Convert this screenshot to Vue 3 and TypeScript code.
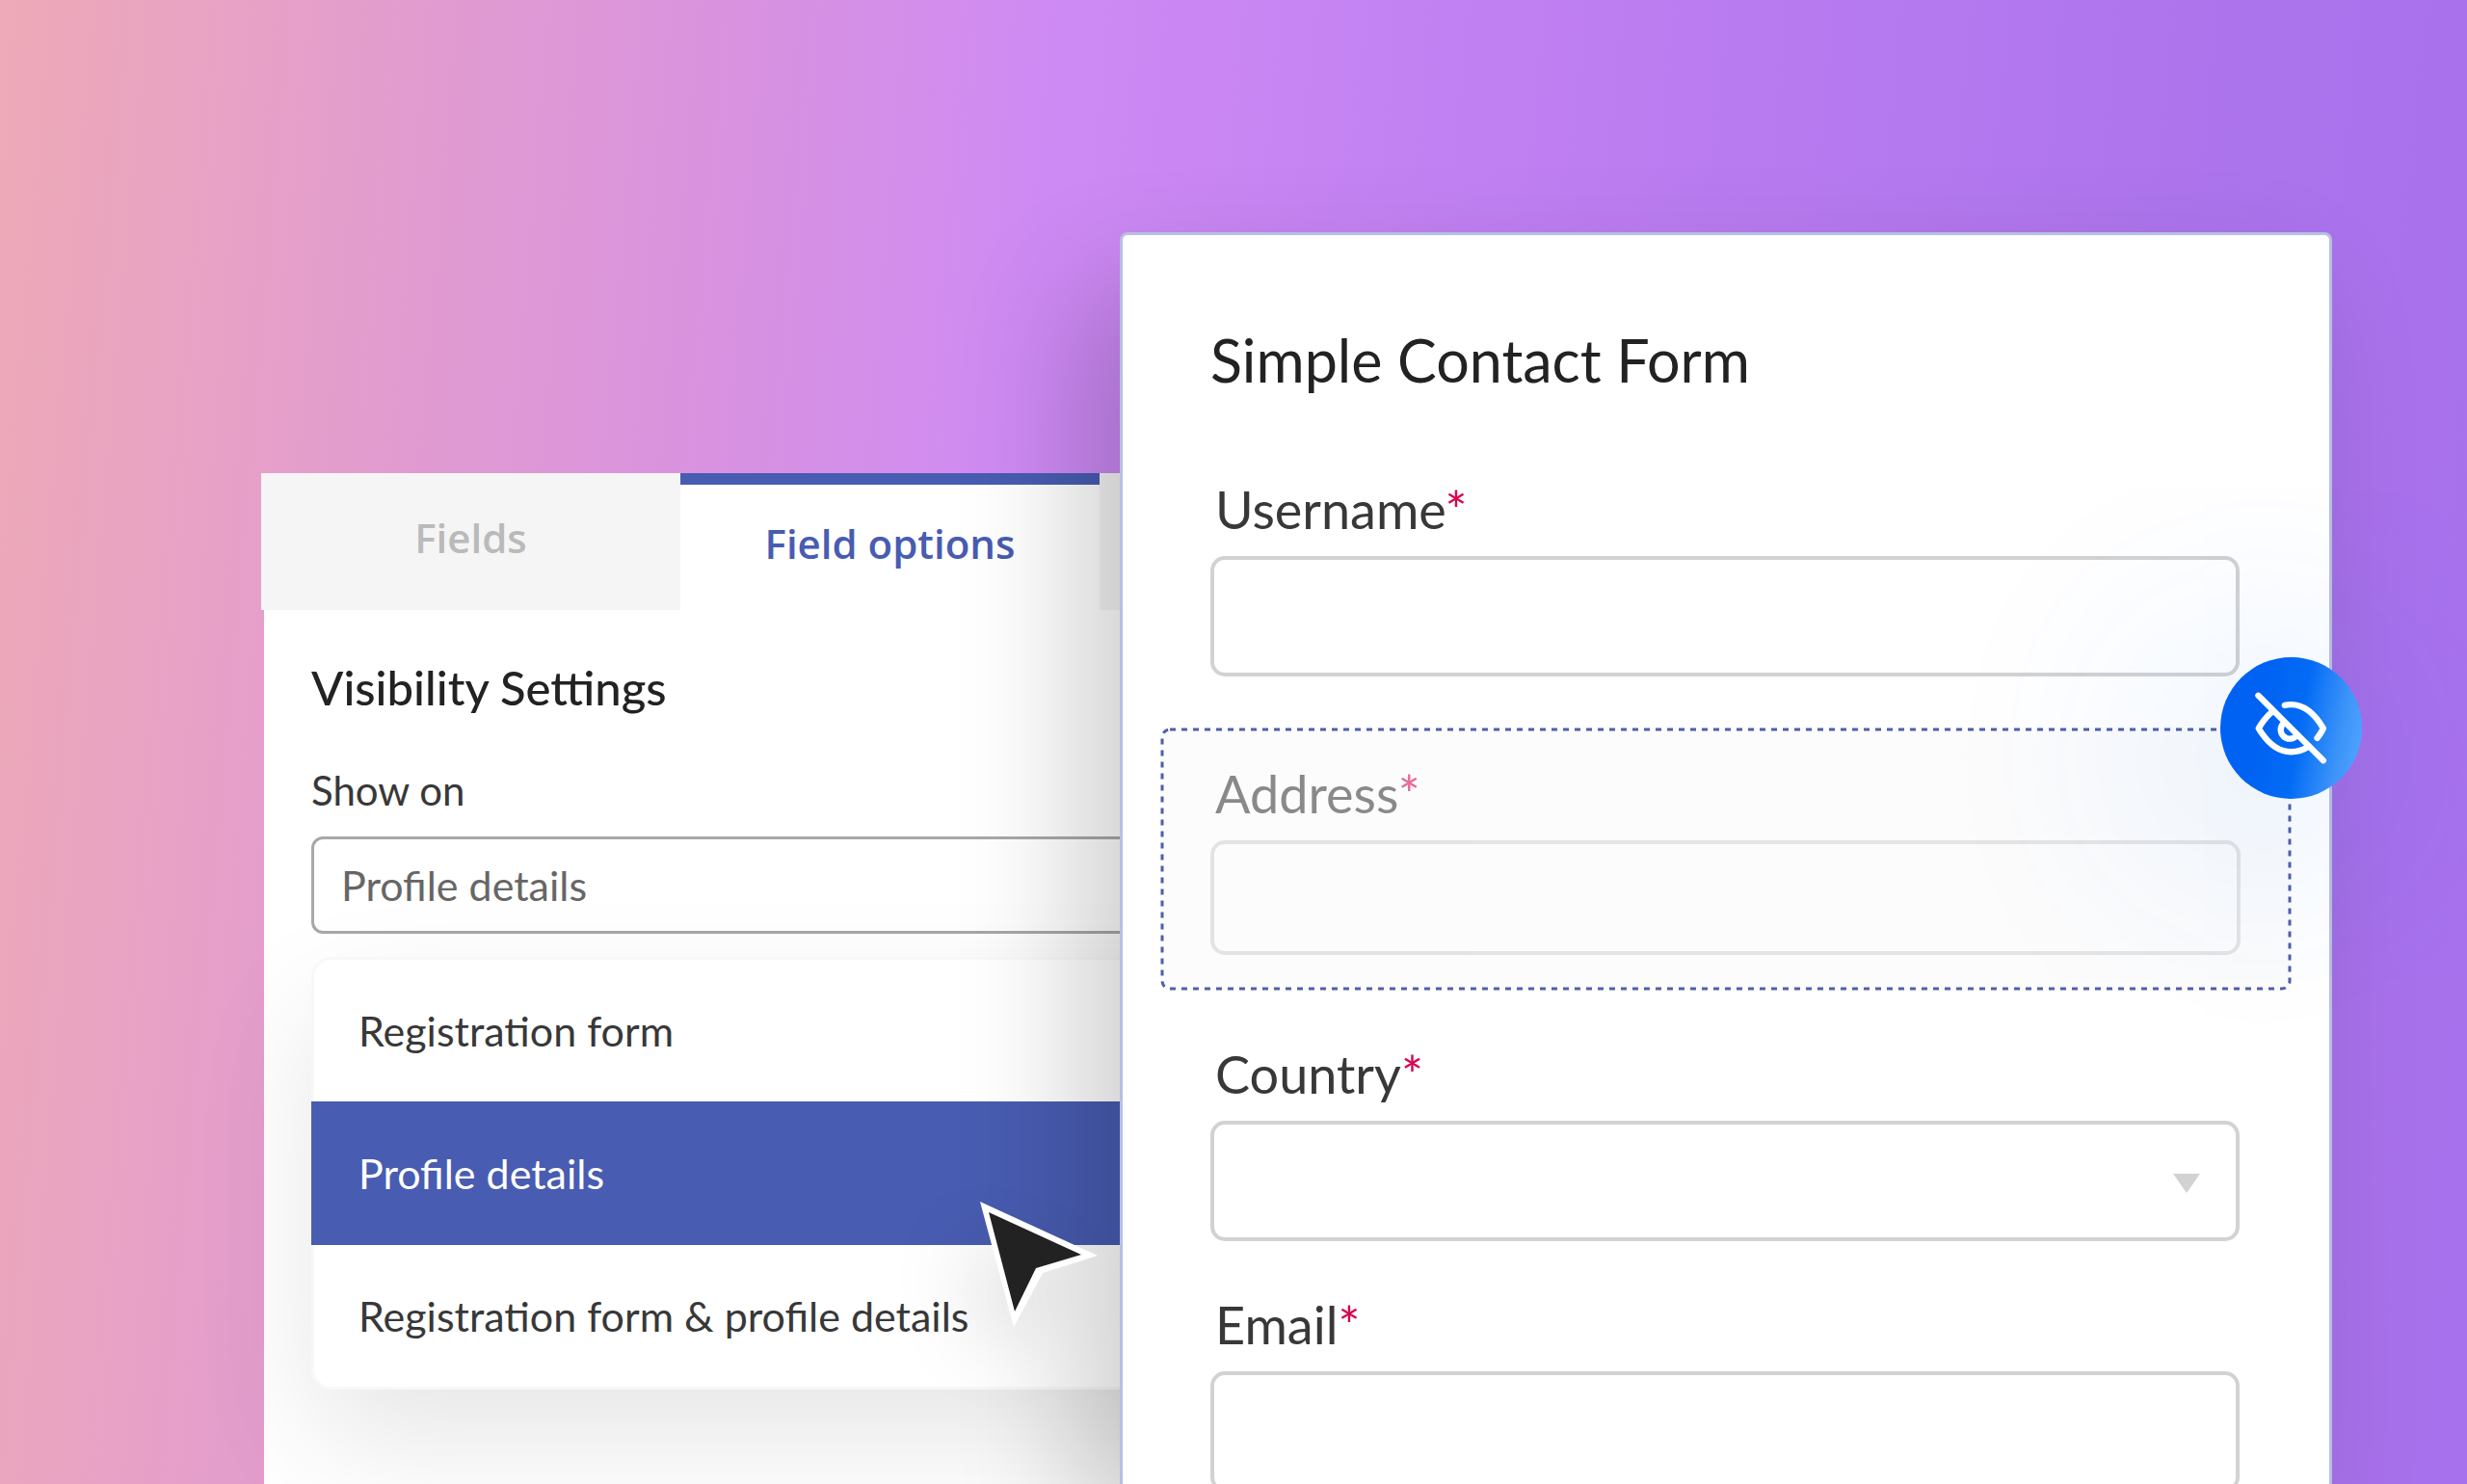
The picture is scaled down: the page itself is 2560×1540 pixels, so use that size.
<script setup lang="ts">
import { ref } from 'vue'

const options: string[] = ['Registration form', 'Profile details', 'Registration form & profile details']
const selected = ref<string>('Profile details')
</script>

<template>
  <main class="scene">
    <section class="panel">
      <div class="tabs" role="tablist">
        <button class="tab" role="tab" type="button" aria-selected="false">Fields</button>
        <button class="tab active" role="tab" type="button" aria-selected="true">Field options</button>
        <span class="tab"></span>
      </div>
      <div class="settings">
        <h2 class="settings-title">Visibility Settings</h2>
        <label class="settings-label" for="show-on">Show on</label>
        <select id="show-on" v-model="selected" class="show-on">
          <option v-for="option in options" :key="option" :value="option">{{ option }}</option>
        </select>
        <div class="menu" role="listbox">
          <button
            v-for="option in options"
            :key="option"
            class="menu-item"
            :class="{ chosen: option === selected }"
            role="option"
            type="button"
            :aria-selected="option === selected"
            @click="selected = option"
          >{{ option }}</button>
        </div>
      </div>
    </section>

    <form class="card" @submit.prevent>
      <h1 class="card-title">Simple Contact Form</h1>
      <div class="field">
        <label for="username">Username<span class="star">*</span></label>
        <input id="username" class="box" type="text" />
      </div>
      <div class="hidden-field">
        <svg class="outline"><rect x="2" y="2" rx="8" /></svg>
        <div class="field faded">
          <label for="address">Address<span class="star">*</span></label>
          <input id="address" class="box" type="text" />
        </div>
        <button class="badge" type="button">
          <svg viewBox="492 127 440 440" fill="none" stroke="#fff" stroke-width="19" stroke-linecap="round" stroke-linejoin="round">
            <path d="M610 246L812 448" />
            <path d="M652 297Q628 318 611 348Q655 421 711 421Q742 421 764 406" />
            <path d="M692 276Q762 262 812 348Q804 365 793 378" />
            <path d="M691 330A28 28 0 1 0 731 368" />
          </svg>
        </button>
      </div>
      <div class="field">
        <label for="country">Country<span class="star">*</span></label>
        <div class="select-wrap">
          <select id="country" class="box"></select>
          <svg class="arrow" viewBox="0 0 28 20"><path d="M0 0H28L14 20Z" fill="#d2d2d2" /></svg>
        </div>
      </div>
      <div class="field">
        <label for="email">Email<span class="star">*</span></label>
        <input id="email" class="box" type="email" />
      </div>
    </form>

    <svg class="cursor" viewBox="0 0 124 132">
      <path d="M1 1L123 57L66 75L36 131Z" fill="#fff" />
      <path d="M10 12L106 56L59 70L37 115Z" fill="#222" />
    </svg>
  </main>
</template>

<style>
body {
  margin: 0;
}
</style>

<style scoped>
.scene {
  position: relative;
  box-sizing: border-box;
  height: 100vh;
  overflow: hidden;
  display: grid;
  grid-template-columns: minmax(0, 271fr) minmax(0, 891fr) minmax(0, 414fr) minmax(0, 844fr) minmax(0, 140fr);
  grid-template-rows: 100%;
  background: linear-gradient(95deg, #eeaab7 0%, #e6a0c8 11%, #d892e0 29%, #ce8af4 41%, #bc7df1 63%, #ab73ec 88%, #a770ec 100%);
  font-family: Lato, sans-serif;
  color: #383838;
}

h1,
h2 {
  margin: 0;
  color: #222;
}

button,
input,
select {
  appearance: none;
  box-sizing: border-box;
  margin: 0;
  border: 0;
  font-family: inherit;
  color: inherit;
}

.panel {
  grid-column: 2 / 4;
  grid-row: 1;
  display: flex;
  flex-direction: column;
  margin-top: 491px;
}

.tabs {
  display: flex;
  height: 142px;
}

.tab {
  flex: 1;
  padding: 0 0 8px;
  background: #f5f5f5;
  color: #bababa;
  font: 600 42px/56px "Open Sans", sans-serif;
}

.tab.active {
  border-top: 12px solid #485cb1;
  background: #fff;
  color: #485cb1;
}

.settings {
  flex: 1;
  display: flex;
  flex-direction: column;
  margin-left: 3px;
  padding: 50px 0 0 49px;
  background: #fff;
}

.settings-title {
  font-size: 49px;
  line-height: 60px;
  font-weight: 500;
}

.settings-label {
  margin-top: 51px;
  font-size: 42px;
  line-height: 52px;
}

.show-on {
  height: 101px;
  margin-top: 22px;
  padding: 0 28px;
  border: 3px solid #a8a8a8;
  border-radius: 12px;
  background: #fff;
  color: #666;
  font-size: 43px;
}

.menu {
  display: flex;
  flex-direction: column;
  margin-top: 27px;
  border-radius: 18px;
  background: #fff;
  box-shadow: 0 0 0 3px #f8f8f8, 0 54px 130px rgba(0, 0, 0, 0.1);
  margin-left: 3px;
}

.menu-item {
  height: 149px;
  padding: 0 46px;
  background: none;
  font-size: 43px;
  text-align: left;
}

.menu-item:first-child,
.menu-item:last-child {
  height: 147px;
}

.menu-item.chosen {
  margin-left: -3px;
  padding-left: 49px;
  background: #485cb1;
  color: #fff;
}

.card {
  grid-column: 3 / 5;
  grid-row: 1;
  display: flex;
  flex-direction: column;
  gap: 53px;
  margin-top: 241px;
  padding: 94px 93px 0 91px;
  border: 3px solid #b8bfe3;
  border-bottom: 0;
  border-radius: 8px 8px 0 0;
  background: #fff;
  box-shadow: -40px 60px 130px rgba(0, 0, 0, 0.2);
}

.card-title {
  margin-bottom: 32px;
  font-size: 61px;
  line-height: 72px;
  font-weight: 400;
}

.field {
  display: flex;
  flex-direction: column;
  gap: 14px;
}

.field label {
  padding-left: 5px;
  font-size: 54px;
  line-height: 68px;
}

.star {
  color: #d9004f;
}

.box {
  width: 100%;
  height: 125px;
  flex-shrink: 0;
  border: 4px solid #d2d2d2;
  border-radius: 15px;
  background: none;
}

.hidden-field {
  position: relative;
  margin: 0 -54px 0 -52px;
  padding: 35px 53px 37px 52px;
  border-radius: 8px;
  background: #fcfcfc;
}

.outline {
  position: absolute;
  top: 0;
  left: 0;
  width: 100%;
  height: 100%;
}

.outline rect {
  width: calc(100% - 4px);
  height: calc(100% - 4px);
  fill: none;
  stroke: #4f5fa8;
  stroke-width: 3px;
  stroke-dasharray: 6 6;
}

.faded {
  opacity: 0.58;
}

.faded .box {
  height: 119px;
}

.badge {
  position: absolute;
  top: -73px;
  right: -73px;
  width: 147px;
  height: 147px;
  padding: 0;
  border-radius: 50%;
  background: linear-gradient(100deg, #0062f3 30%, #026bf5 55%, #3b93f9 80%, #55a9ff 100%);
  box-shadow: -30px 30px 220px 90px rgba(0, 120, 255, 0.07);
}

.badge svg {
  display: block;
  width: 100%;
}

.select-wrap {
  position: relative;
  display: flex;
}

.arrow {
  position: absolute;
  top: 55px;
  right: 41px;
  width: 28px;
}

.cursor {
  position: absolute;
  left: 1016px;
  top: 1246px;
  width: 124px;
  filter: drop-shadow(-20px 40px 40px rgba(0, 0, 0, 0.12));
}
</style>
